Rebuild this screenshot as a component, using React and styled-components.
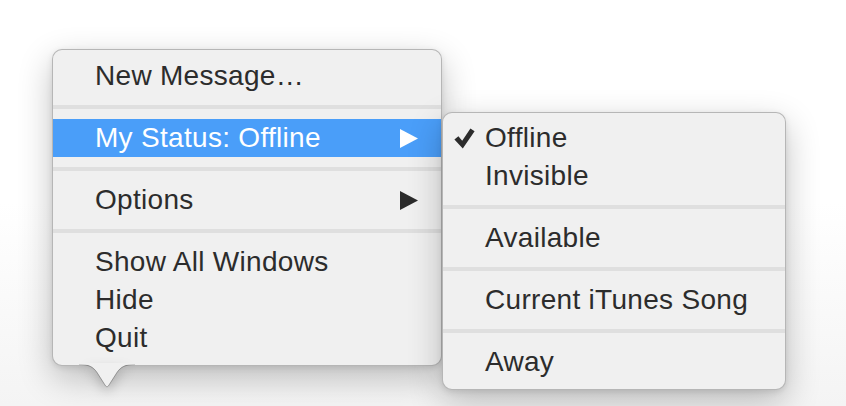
import React from "react";
import styled, { createGlobalStyle } from "styled-components";

const Global = createGlobalStyle`
  html, body { margin: 0; padding: 0; background: #ffffff; }
  body { font-family: "Liberation Sans", Arial, sans-serif; }
  * { box-sizing: border-box; }
`;

const Stage = styled.div`
  width: 846px;
  height: 406px;
  overflow: hidden;
  display: flex;
  align-items: flex-start;
  padding: 49px 0 0 52px;
  background: linear-gradient(#ffffff 0%, #ffffff 50%, #f4f4f4 100%);
`;

const Menu = styled.div`
  position: relative;
  width: ${(p) => p.$width}px;
  flex: 0 0 ${(p) => p.$width}px;
  margin-top: ${(p) => p.$top || 0}px;
  padding: ${(p) => p.$padTop}px 0 ${(p) => p.$padBottom}px;
  background: #f0f0f0;
  border: 1px solid rgba(0, 0, 0, 0.24);
  border-radius: 10px;
  box-shadow: 0 12px 34px rgba(0, 0, 0, 0.24), 0 2px 6px rgba(0, 0, 0, 0.1);
  z-index: ${(p) => p.$z || 1};
  display: flex;
  flex-direction: column;
`;

const Row = styled.div`
  height: 38px;
  display: flex;
  align-items: center;
  padding: 0 23px 0 11px;
  font-size: 28px;
  line-height: 38px;
  letter-spacing: 0.3px;
  color: ${(p) => (p.$active ? "#ffffff" : "#2c2c2c")};
  background: ${(p) => (p.$active ? "#4a9ef9" : "transparent")};
  white-space: nowrap;
`;

const Gutter = styled.span`
  width: 31px;
  flex: 0 0 31px;
  display: flex;
  align-items: center;
  height: 100%;
  padding-top: 1px;
`;

const Label = styled.span`
  flex: 1;
`;

const Separator = styled.div`
  height: 24px;
  display: flex;
  align-items: center;
  &::before {
    content: "";
    display: block;
    width: 100%;
    height: 4px;
    background: #dfdfdf;
  }
`;

const Tail = styled.svg`
  position: absolute;
  left: 26px;
  top: 100%;
  margin-top: -1px;
  overflow: visible;
`;

const Arrow = ({ color }) => (
  <svg width="18" height="19" viewBox="0 0 18 19">
    <polygon points="0,0 18,9.5 0,19" fill={color} />
  </svg>
);

const Check = () => (
  <svg width="21" height="21" viewBox="0 0 21 21">
    <path
      d="M0.4 11.6 L4.4 8.2 L8.2 12.8 L16.4 0.4 L20.6 3.2 L8.8 20.6 Z"
      fill="#2c2c2c"
    />
  </svg>
);

const Item = ({ children, active, sub, checked }) => (
  <Row $active={active}>
    <Gutter>{checked && <Check />}</Gutter>
    <Label>{children}</Label>
    {sub && <Arrow color={active ? "#ffffff" : "#2b2b2b"} />}
  </Row>
);

export default function App() {
  return (
    <>
      <Global />
      <Stage>
        <Menu $width={390} $padTop={7} $padBottom={8} $z={1}>
          <Item>New Message…</Item>
          <Separator />
          <Item active sub>My Status: Offline</Item>
          <Separator />
          <Item sub>Options</Item>
          <Separator />
          <Item>Show All Windows</Item>
          <Item>Hide</Item>
          <Item>Quit</Item>
          <Tail width="56" height="25" viewBox="0 0 56 25">
            <path
              d="M0 0 C10 0 14 2.5 18 8 L26.6 21.6 Q28 23.6 29.4 21.6 L38 8 C42 2.5 46 0 56 0 Z"
              fill="#f0f0f0"
              style={{ filter: "drop-shadow(0 5px 6px rgba(0,0,0,0.22))" }}
            />
            <path
              d="M0 0.5 C10 0.5 14 3 18 8.5 L26.6 22 Q28 24 29.4 22 L38 8.5 C42 3 46 0.5 56 0.5"
              fill="none"
              stroke="rgba(0,0,0,0.24)"
              strokeWidth="1"
            />
            <rect x="0" y="-1" width="56" height="1.4" fill="#f0f0f0" />
          </Tail>
        </Menu>
        <Menu $width={344} $top={63} $padTop={6} $padBottom={8} $z={2}>
          <Item checked>Offline</Item>
          <Item>Invisible</Item>
          <Separator />
          <Item>Available</Item>
          <Separator />
          <Item>Current iTunes Song</Item>
          <Separator />
          <Item>Away</Item>
        </Menu>
      </Stage>
    </>
  );
}
